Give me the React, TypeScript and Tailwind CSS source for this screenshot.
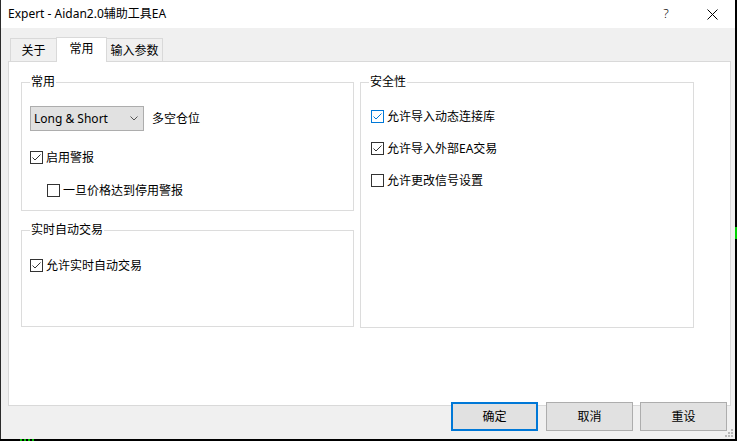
import type { ReactNode } from 'react'

const FONT = "font-['Segoe_UI','Noto_Sans','Noto_Sans_CJK_SC',sans-serif]"

function CheckBox({ checked, hover, label }: { checked?: boolean; hover?: boolean; label: string }) {
  const color = hover ? '#0078d7' : '#333333'
  return (
    <div className="flex items-center h-[13px]">
      <div
        className={`w-[13px] h-[13px] border bg-white flex items-center justify-center shrink-0 ${
          hover ? 'border-[#0078d7]' : 'border-[#333333]'
        }`}
      >
        {checked && (
          <svg width="11" height="11" viewBox="0 0 11 11">
            <polyline points="1.5,5.5 4,8 9.5,2.5" fill="none" stroke={color} strokeWidth="1" />
          </svg>
        )}
      </div>
      <span className="ml-[3px] text-[12px] leading-[16px] text-black whitespace-nowrap">{label}</span>
    </div>
  )
}

function Group({ title, className, children }: { title: string; className: string; children: ReactNode }) {
  return (
    <div className={`relative border border-[#dcdcdc] ${className}`}>
      {/* 标题压在边框上 */}
      <span className="absolute -top-[9px] left-[8px] bg-white px-[1px] text-[12px] leading-[16px] text-black">
        {title}
      </span>
      {children}
    </div>
  )
}

function Tab({ label, active, className }: { label: string; active?: boolean; className: string }) {
  return (
    <div
      className={`flex items-center justify-center text-[12px] leading-[16px] text-black border border-[#d9d9d9] ${
        active
          ? 'h-[25px] bg-white border-b-0 relative z-10 -mb-px pb-[3px]'
          : 'h-[23px] bg-[#f0f0f0] border-b-0 pt-[1px]'
      } ${className}`}
    >
      {label}
    </div>
  )
}

function Button({ label, primary, className = '' }: { label: string; primary?: boolean; className?: string }) {
  return (
    <div
      className={`w-[87px] h-[29px] bg-[#e1e1e1] flex items-center justify-center text-[12px] leading-[16px] text-black ${
        primary ? 'border-2 border-[#0078d7]' : 'border border-[#adadad]'
      } ${className}`}
    >
      {label}
    </div>
  )
}

export default function App() {
  return (
    <div className={`relative w-[737px] h-[441px] bg-black overflow-hidden ${FONT}`}>
      {/* 背后图表的残影 */}
      <div className="absolute left-[20px] top-[439px] w-[14px] h-[2px] bg-[repeating-linear-gradient(90deg,#00c000_0_2px,transparent_2px_4px)]" />
      <div className="absolute left-[735px] top-[227px] w-[2px] h-[12px] bg-[#00d000]" />

      <div className="w-[735px] h-[439px] bg-[#f0f0f0] border-l border-[#2b2b2b] flex flex-col">
        {/* 标题栏 */}
        <div className="h-[28px] bg-white flex items-center shrink-0">
          <span className="ml-[7px] text-[12px] leading-[16px] text-black">Expert - Aidan2.0辅助工具EA</span>
          <div className="ml-auto flex h-full">
            <div className="w-[46px] h-full flex items-center justify-center text-[13px] text-black font-light pb-[1px]">
              ?
            </div>
            <div className="w-[46px] h-full flex items-center justify-center">
              <svg width="11" height="11" viewBox="0 0 11 11">
                <path d="M0.5 0.5 L10.5 10.5 M10.5 0.5 L0.5 10.5" stroke="#000" strokeWidth="1" />
              </svg>
            </div>
          </div>
        </div>

        <div className="flex-1 pl-[7px] pr-[4px] flex flex-col">
          {/* 选项卡 */}
          <div className="h-[33px] flex items-end pl-[2px]">
            <Tab label="关于" className="w-[47px]" />
            <Tab label="常用" active className="w-[51px] -ml-px" />
            <Tab label="输入参数" className="w-[57px] -ml-px" />
          </div>

          <div className="w-[723px] h-[345px] bg-white border border-[#d9d9d9] pt-[20px] pl-[12px] flex gap-[6px]">
            <div className="w-[333px] flex flex-col">
              <Group title="常用" className="h-[129px] pt-[23px] pl-[8px]">
                <div className="flex items-center">
                  <div className="w-[114px] h-[25px] bg-[#e1e1e1] border border-[#adadad] flex items-center pl-[3px] pr-[5px]">
                    <span className="text-[12px] leading-[16px] text-black">Long &amp; Short</span>
                    <svg className="ml-auto" width="8" height="5" viewBox="0 0 8 5">
                      <polyline points="0.5,0.5 4,4 7.5,0.5" fill="none" stroke="#555" strokeWidth="1" />
                    </svg>
                  </div>
                  <span className="ml-[8px] text-[12px] leading-[16px] text-black">多空仓位</span>
                </div>
                <div className="mt-[20px]">
                  <CheckBox checked label="启用警报" />
                </div>
                <div className="mt-[20px] pl-[17px]">
                  <CheckBox label="一旦价格达到停用警报" />
                </div>
              </Group>

              <Group title="实时自动交易" className="mt-[19px] h-[97px] pt-[28px] pl-[8px]">
                <CheckBox checked label="允许实时自动交易" />
              </Group>
            </div>

            <Group title="安全性" className="w-[334px] h-[246px] pt-[27px] pl-[10px] flex flex-col gap-[19px]">
              <CheckBox checked hover label="允许导入动态连接库" />
              <CheckBox checked label="允许导入外部EA交易" />
              <CheckBox label="允许更改信号设置" />
            </Group>
          </div>

          {/* 底部按钮 */}
          <div className="relative z-10 -mt-[4px] flex justify-end pr-[4px]">
            <Button label="确定" primary />
            <Button label="取消" className="ml-[8px]" />
            <Button label="重设" className="ml-[7px]" />
          </div>
        </div>
      </div>

      {/* 右下角拖拽手柄 */}
      <svg className="absolute left-[724px] top-[428px]" width="10" height="10" viewBox="0 0 10 10">
        <rect x="7" y="1" width="2" height="2" fill="#b8b8b8" />
        <rect x="4" y="4" width="2" height="2" fill="#b8b8b8" />
        <rect x="7" y="4" width="2" height="2" fill="#b8b8b8" />
        <rect x="1" y="7" width="2" height="2" fill="#b8b8b8" />
        <rect x="4" y="7" width="2" height="2" fill="#b8b8b8" />
        <rect x="7" y="7" width="2" height="2" fill="#b8b8b8" />
      </svg>
    </div>
  )
}
